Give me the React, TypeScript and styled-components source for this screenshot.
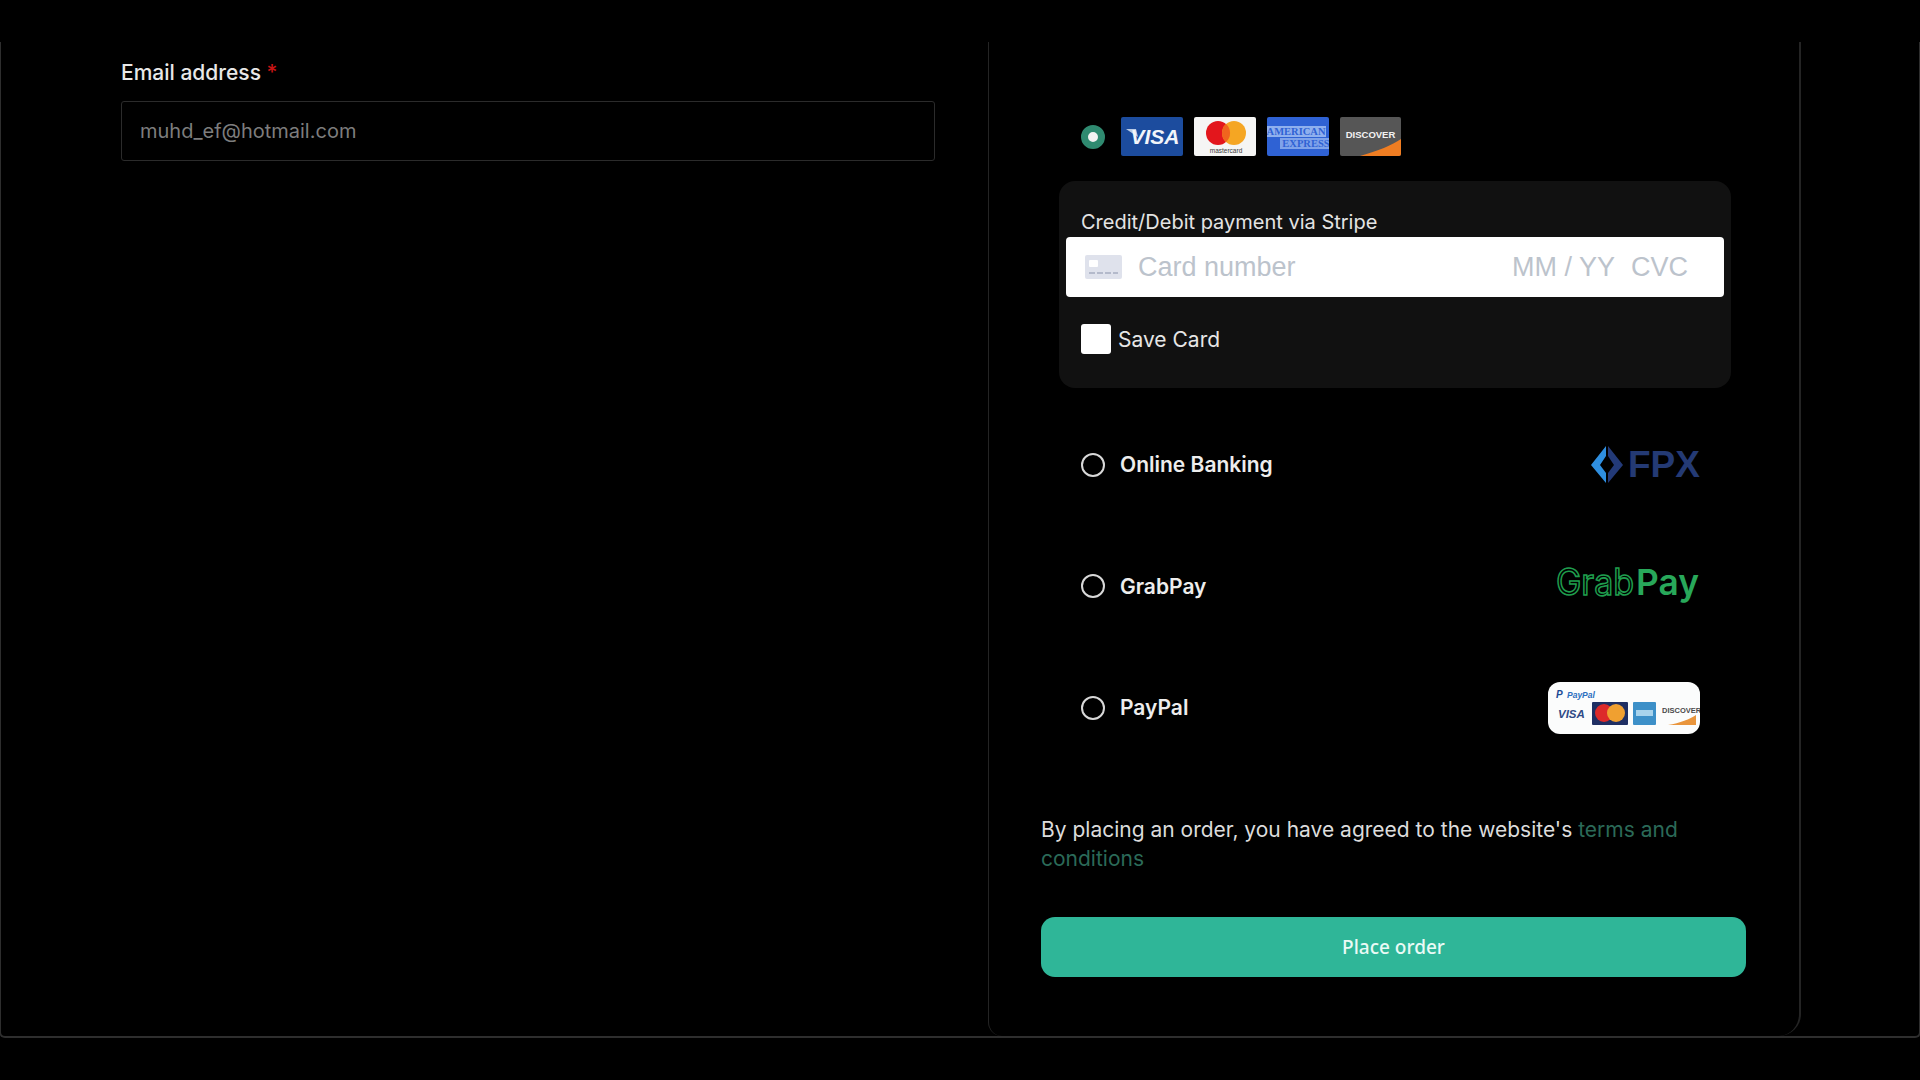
import React from 'react';
import styled, {createGlobalStyle} from 'styled-components';

const GlobalStyle = createGlobalStyle`
  html, body {
    margin: 0;
    padding: 0;
    height: 100%;
    background: #000;
  }
  body {
    font-family: Inter, "Liberation Sans", sans-serif;
    overflow: hidden;
  }
  * {
    box-sizing: border-box;
  }
`;

function VisaCard() {
  return (
    <svg width="62" height="39" viewBox="0 0 62 39">
      <rect width="62" height="39" rx="2" fill="#1c4c9e" />
      <path d="M5 12 L15 12 L17 20 Z" fill="#b9cbe6" />
      <text x="34" y="27" textAnchor="middle" fontFamily="Liberation Sans" fontSize="21" fontWeight="700" fontStyle="italic" fill="#f2f5fa">VISA</text>
    </svg>
  );
}

function MastercardCard() {
  return (
    <svg width="62" height="39" viewBox="0 0 62 39">
      <rect width="62" height="39" rx="2" fill="#f5f5f4" />
      <circle cx="24" cy="16" r="12" fill="#e3161c" />
      <circle cx="40" cy="16" r="12" fill="#f5a623" />
      <path d="M32 7 A12 12 0 0 1 32 25 A12 12 0 0 1 32 7 Z" fill="#f0641e" />
      <text x="32" y="36" textAnchor="middle" fontFamily="Liberation Sans" fontSize="6.5" fill="#3a3a3a">mastercard</text>
    </svg>
  );
}

function AmexCard() {
  return (
    <svg width="62" height="39" viewBox="0 0 62 39">
      <rect width="62" height="39" rx="2" fill="#2f62d4" />
      <rect x="0" y="9" width="59" height="11" fill="#8fb0ee" />
      <rect x="13" y="21" width="49" height="11" fill="#7fa3ea" />
      <text x="29" y="18" textAnchor="middle" fontFamily="Liberation Serif" fontSize="10.5" fontWeight="700" fill="#2f62d4">AMERICAN</text>
      <text x="39" y="30" textAnchor="middle" fontFamily="Liberation Serif" fontSize="10.5" fontWeight="700" fill="#2f62d4">EXPRESS</text>
    </svg>
  );
}

function DiscoverCard() {
  return (
    <svg width="61" height="39" viewBox="0 0 61 39">
      <rect width="61" height="39" rx="2" fill="#565656" />
      <path d="M20 39 C38 34 52 28 61 22 L61 37 A2 2 0 0 1 59 39 Z" fill="#ef7d22" />
      <text x="30.5" y="21" textAnchor="middle" fontFamily="Liberation Sans" fontSize="9.5" fontWeight="700" fill="#f2f2f2">DISCOVER</text>
    </svg>
  );
}

function CardGlyph() {
  return (
    <svg width="37" height="24" viewBox="0 0 37 24">
      <rect width="37" height="24" rx="2" fill="#dfe2ec" />
      <rect x="4" y="5" width="9" height="7" rx="1" fill="#fff" />
      <path d="M4 18h6M12 18h6M20 18h6M28 18h5" stroke="#b4bacb" strokeWidth="2" />
    </svg>
  );
}

function FpxLogo() {
  return (
    <svg width="110" height="38" viewBox="0 0 110 38">
      <path d="M16 0 L1 19 L16 37 L16 27 L10 19 L16 10 Z" fill="#2f8fe0" />
      <path d="M18 0 L33 19 L18 37 L18 27 L24 19 L18 10 Z" fill="#233a78" />
      <text x="38" y="31" fontFamily="Liberation Sans" fontSize="37" fontWeight="700" textLength="72" lengthAdjust="spacingAndGlyphs" fill="#243a74">FPX</text>
    </svg>
  );
}

function GrabPayLogo() {
  return (
    <svg width="144" height="40" viewBox="0 0 144 40">
      <text x="0" y="29" fontFamily="Inter" fontSize="37" fontWeight="400" textLength="78" lengthAdjust="spacingAndGlyphs" fill="none" stroke="#1f9d4d" strokeWidth="1.6">Grab</text>
      <text x="80" y="29" fontFamily="Inter" fontSize="36" fontWeight="600" textLength="63" lengthAdjust="spacingAndGlyphs" fill="#28a85a">Pay</text>
    </svg>
  );
}

function PaypalLogo() {
  return (
    <svg width="152" height="52" viewBox="0 0 152 52">
      <rect width="152" height="52" rx="12" fill="#fbfcfc" />
      <text x="8" y="16" fontFamily="Liberation Sans" fontSize="10" fontWeight="700" fontStyle="italic" fill="#1c4a94">P</text>
      <text x="19" y="16" fontFamily="Liberation Sans" fontSize="8.5" fontWeight="700" fontStyle="italic" fill="#2b6fc0">PayPal</text>
      <text x="10" y="36" fontFamily="Liberation Sans" fontSize="11.5" fontWeight="700" fontStyle="italic" fill="#2f4a86">VISA</text>
      <rect x="44" y="20" width="36" height="23" rx="1" fill="#1f2f63" />
      <circle cx="56" cy="31" r="9" fill="#dd2a2a" />
      <circle cx="68" cy="31" r="9" fill="#f0a030" />
      <rect x="85" y="20" width="23" height="23" rx="1" fill="#3d90c8" />
      <rect x="88" y="28" width="17" height="6" fill="#a8d3ec" />
      <text x="114" y="31" fontFamily="Liberation Sans" fontSize="7.5" fontWeight="700" fill="#4a4a4a">DISCOVER</text>
      <path d="M120 43 C132 41 142 37 148 33 L148 43 Z" fill="#e9953c" />
    </svg>
  );
}

const methods = [
  {name: 'Online Banking', logo: <FpxLogo />},
  {name: 'GrabPay', logo: <GrabPayLogo />},
  {name: 'PayPal', logo: <PaypalLogo />},
];

export default function App() {
  return (
    <>
      <GlobalStyle />
      <Page>
        <Frame>
          <Billing>
            <FieldLabel>
              Email address <Required>*</Required>
            </FieldLabel>
            <EmailInput>muhd_ef@hotmail.com</EmailInput>
          </Billing>
          <Payment>
            <CardBrands>
              <Radio $checked />
              <BrandList>
                <VisaCard />
                <MastercardCard />
                <AmexCard />
                <DiscoverCard />
              </BrandList>
            </CardBrands>
            <StripePanel>
              <StripeLabel>Credit/Debit payment via Stripe</StripeLabel>
              <CardField>
                <CardGlyph />
                <CardNumber>Card number</CardNumber>
                <CardHint>MM / YY</CardHint>
                <CardHint>CVC</CardHint>
              </CardField>
              <SaveRow>
                <Checkbox />
                Save Card
              </SaveRow>
            </StripePanel>
            <MethodList>
              {methods.map((method) => (
                <MethodRow key={method.name}>
                  <Radio />
                  <MethodName>{method.name}</MethodName>
                  {method.logo}
                </MethodRow>
              ))}
            </MethodList>
            <Terms>
              By placing an order, you have agreed to the website's{' '}
              <TermsLink>terms and conditions</TermsLink>
            </Terms>
            <PlaceOrder>Place order</PlaceOrder>
          </Payment>
        </Frame>
      </Page>
    </>
  );
}

const Page = styled.div`
  width: 1920px;
  height: 1080px;
  padding-top: 42px;
  background: #000;
`;

const Frame = styled.div`
  display: grid;
  grid-template-columns: 988px 812px 1fr;
  height: 996px;
  border: 2px solid #2e2e2e;
  border-top: 0;
  border-radius: 0 0 6px 6px;
  margin-left: -1px;
  margin-right: -1px;
`;

const Billing = styled.section`
  padding: 17px 0 0 120px;
`;

const FieldLabel = styled.div`
  font-size: 21px;
  font-weight: 500;
  line-height: 28px;
  color: #e8e8e8;
`;

const Required = styled.span`
  color: #c81414;
`;

const EmailInput = styled.div`
  display: flex;
  align-items: center;
  width: 814px;
  height: 60px;
  margin-top: 14px;
  padding-left: 18px;
  border: 1px solid #2b2b2b;
  border-radius: 3px;
  font-size: 20px;
  color: #7d7d7d;
`;

const Payment = styled.section`
  padding: 75px 53px 0 52px;
  border-left: 1px solid #242424;
  border-right: 2px solid #242424;
  border-bottom: 0;
  border-radius: 0 0 22px 14px;
  margin-left: -1px;
`;

const CardBrands = styled.div`
  display: flex;
  align-items: center;
  gap: 16px;
  padding-left: 40px;
`;

const BrandList = styled.div`
  display: flex;
  gap: 11px;

  & svg {
    display: block;
  }
`;

const Radio = styled.span<{$checked?: boolean}>`
  flex-shrink: 0;
  width: 24px;
  height: 24px;
  border-radius: 50%;
  border: ${({$checked}) => ($checked ? '7px solid #2f8a70' : '2px solid #d8d8d8')};
  background: ${({$checked}) => ($checked ? '#f2f2f2' : 'transparent')};
`;

const StripePanel = styled.div`
  width: 672px;
  height: 207px;
  margin: 25px 0 0 18px;
  padding-top: 30px;
  background: #111;
  border-radius: 16px;
`;

const StripeLabel = styled.div`
  padding-left: 22px;
  font-size: 20px;
  line-height: 22px;
  color: #e4e4e4;
`;

const CardField = styled.div`
  display: flex;
  align-items: center;
  height: 60px;
  margin: 4px 7px 0;
  padding: 0 36px 0 19px;
  background: #fff;
  border-radius: 4px;
  font-family: "Liberation Sans", sans-serif;
  font-size: 27px;
  color: #bcc3cc;
`;

const CardNumber = styled.span`
  flex: 1;
  margin-left: 16px;
`;

const CardHint = styled.span`
  margin-left: 16px;
`;

const SaveRow = styled.label`
  display: flex;
  align-items: center;
  gap: 7px;
  margin: 27px 0 0 22px;
  font-size: 21px;
  color: #e6e6e6;
`;

const Checkbox = styled.span`
  width: 30px;
  height: 30px;
  background: #fff;
  border-radius: 3px;
`;

const MethodList = styled.div`
  margin-top: 16px;
`;

const MethodRow = styled.div`
  display: flex;
  align-items: center;
  height: 121.5px;
  padding: 0 46px 0 40px;

  & svg {
    display: block;
  }
`;

const MethodName = styled.span`
  flex: 1;
  margin-left: 15px;
  font-size: 21px;
  font-weight: 600;
  color: #ededed;
`;

const Terms = styled.p`
  margin: 46px 0 0;
  font-size: 21px;
  line-height: 29px;
  color: #dcdcdc;
`;

const TermsLink = styled.span`
  color: #2b6a58;
`;

const PlaceOrder = styled.button`
  display: block;
  width: 705px;
  height: 60px;
  margin-top: 44px;
  border: 0;
  border-radius: 14px;
  background: #2fb698;
  font-family: "Noto Sans", sans-serif;
  font-size: 19px;
  font-weight: 500;
  color: #eafaf5;
`;
